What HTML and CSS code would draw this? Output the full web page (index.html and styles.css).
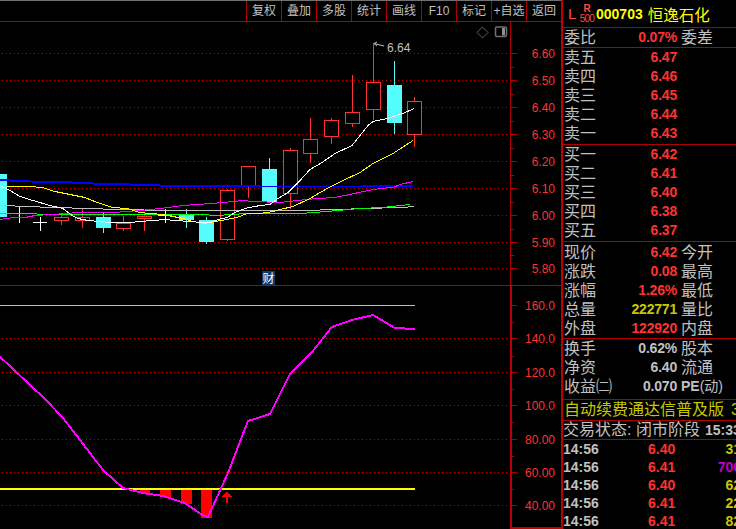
FILE: index.html
```html
<!DOCTYPE html>
<html lang="en">

<head>
    <meta http-equiv="Content-Type" content="text/html; charset=UTF-8">
    <title>000703 恒逸石化</title>
    <link rel="stylesheet" href="styles.css">
</head>

<body>
    <div class="app">
        <div class="main">
            <div class="toolbar">
                <div class="tool">复权</div>
                <div class="tool">叠加</div>
                <div class="tool">多股</div>
                <div class="tool">统计</div>
                <div class="tool">画线</div>
                <div class="tool">F10</div>
                <div class="tool">标记</div>
                <div class="tool">+自选</div>
                <div class="tool">返回</div>
            </div>
            <!-- viewBox starts at y=22 so chart numbers are page pixels -->
            <svg class="chart" width="561" height="507" viewBox="0 22 561 507">
                <g class="grid">
                    <line x1="2" y1="53.5" x2="509" y2="53.5" />
                    <line x1="2" y1="80.5" x2="509" y2="80.5" />
                    <line x1="2" y1="107.5" x2="509" y2="107.5" />
                    <line x1="2" y1="134.5" x2="509" y2="134.5" />
                    <line x1="2" y1="161.5" x2="509" y2="161.5" />
                    <line x1="2" y1="188.5" x2="509" y2="188.5" />
                    <line x1="2" y1="215.5" x2="509" y2="215.5" />
                    <line x1="2" y1="242.5" x2="509" y2="242.5" />
                    <line x1="2" y1="268.5" x2="509" y2="268.5" />
                    <line x1="2" y1="338.5" x2="509" y2="338.5" />
                    <line x1="2" y1="372.5" x2="509" y2="372.5" />
                    <line x1="2" y1="405.5" x2="509" y2="405.5" />
                    <line x1="2" y1="439.5" x2="509" y2="439.5" />
                    <line x1="2" y1="472.5" x2="509" y2="472.5" />
                    <line x1="2" y1="505.5" x2="509" y2="505.5" />
                </g>

                <!-- candles -->
                <g class="up">
                    <path d="M61.5 214V217M61.5 221V225M82.5 208V217M82.5 221V228M123.5 216V223M123.5 229V231M144.5 213V216M144.5 218V231M227.5 189V190M227.5 240V241M248.5 186V198M290.5 148V151M290.5 194V209M310.5 118V140M310.5 154V163M331.5 118V121M331.5 137V144M352.5 75V113M352.5 124V127M373.5 43V83M373.5 110V120M414.5 97V102M414.5 135V147" />
                    <rect x="54.5" y="217.5" width="14" height="3" />
                    <rect x="75.5" y="217.5" width="14" height="3" />
                    <rect x="116.5" y="223.5" width="14" height="5" />
                    <rect x="137.5" y="216.5" width="14" height="2" />
                    <rect x="220.5" y="190.5" width="14" height="49" />
                    <rect x="241.5" y="166.5" width="14" height="19" />
                    <rect x="283.5" y="150.5" width="14" height="43" />
                    <rect x="303.5" y="139.5" width="14" height="14" />
                    <rect x="324.5" y="120.5" width="14" height="16" />
                    <rect x="345.5" y="112.5" width="14" height="11" />
                    <rect x="366.5" y="82.5" width="14" height="27" />
                    <rect x="407.5" y="101.5" width="14" height="33" />
                </g>
                <g class="down">
                    <path d="M103.5 213V233M186.5 209V228M206.5 217V244M269.5 158V169M394.5 61V134" />
                    <rect x="-1" y="174" width="8" height="43" />
                    <rect x="96" y="217" width="15" height="11" />
                    <rect x="179" y="215" width="15" height="5" />
                    <rect x="199" y="220" width="15" height="22" />
                    <rect x="262" y="169" width="15" height="33" />
                    <rect x="387" y="85" width="15" height="38" />
                </g>
                <path class="doji" d="M19.5 206V223M40.5 217V231M33 222.5H47M165.5 209V223M158 215.5H172" />

                <!-- moving averages -->
                <g class="averages">
                    <polyline class="ma-blue" points="0,179 10,180 30,181 72,182 93,183 130,184 160,185 195,185 260,186 362,186 414,185" />
                    <polyline class="ma-gray" points="0,205 30,206 50,207 93,208 113,209 175,210 270,210 300,210 340,209 363,208 403,207 414,206" />
                    <polyline class="ma-green" points="0,213 73,214 113,214 200,214 217,215 247,213 270,213 300,213 327,211 360,208 383,207 410,204" />
                    <polyline class="ma-magenta" points="0,219 13,217 25,217 35,215 52,214 67,213 78,212 113,212 140,210 160,208 168,207 183,205 197,204 212,203 223,202 233,201 243,200 253,201 280,202 297,200 317,198 335,197 350,194 363,191 380,188 393,187 400,184 413,181" />
                    <polyline class="ma-yellow" points="0,187 15,186 30,186 42,187 55,191 70,194 85,197 97,202 113,207 127,208 140,212 150,213 163,214 173,216 183,218 193,221 205,223 215,221 227,219 237,217 247,213 260,213 273,211 280,209 293,206 310,198 327,188 343,180 360,172 373,163 393,153 413,140" />
                    <polyline class="ma-white" points="0,185 10,190 20,196 33,200 50,205 63,208 72,215 78,218 88,220 100,221 110,222 130,222 140,221 153,220 165,219 175,220 190,221 202,222 210,222 218,219 227,217 235,212 245,208 260,205 270,204 278,198 288,192 300,180 310,169 322,162 335,153 352,145 360,135 368,125 373,121 387,118 403,113 414,108" />
                </g>

                <!-- highest price mark -->
                <path class="mark" d="M384 46L374 43.5M374 43.5L377 42M374 43.5L377 46" />
                <text class="mark-text" x="387" y="52">6.64</text>

                <!-- corner icons -->
                <path class="icon-line" d="M482.5 27L488 32.5L482.5 38L477 32.5Z" />
                <rect class="icon-box" x="495.5" y="27" width="11" height="9.5" rx="1.5" />
                <rect class="icon-fill" x="502" y="28" width="3" height="7.5" />

                <!-- finance badge -->
                <rect class="badge" x="262" y="271" width="13" height="14" />
                <text class="badge-text" x="262.5" y="283">财</text>

                <!-- frame and axis -->
                <path class="frame" d="M0 285.5H561M510.5 22V285" />
                <path class="frame-thick" d="M511 285V528H561" />
                <path class="frame" d="M511 53.5H517M511 67.5H514M511 80.5H517M511 94.5H514M511 107.5H517M511 121.5H514M511 134.5H517M511 148.5H514M511 161.5H517M511 175.5H514M511 188.5H517M511 202.5H514M511 215.5H517M511 229.5H514M511 242.5H517M511 255.5H514M511 268.5H517" />
                <path class="frame" d="M511 305.5H517M511 322.5H514M511 338.5H517M511 356.5H514M511 372.5H517M511 389.5H514M511 405.5H517M511 422.5H514M511 439.5H517M511 456.5H514M511 472.5H517M511 489.5H514M511 505.5H517" />

                <g class="axis-text">
                    <text x="555" y="58">6.60</text>
                    <text x="555" y="85">6.50</text>
                    <text x="555" y="112">6.40</text>
                    <text x="555" y="139">6.30</text>
                    <text x="555" y="166">6.20</text>
                    <text x="555" y="193">6.10</text>
                    <text x="555" y="220">6.00</text>
                    <text x="555" y="247">5.90</text>
                    <text x="555" y="273">5.80</text>
                    <text x="555" y="310">160.0</text>
                    <text x="555" y="343">140.0</text>
                    <text x="555" y="377">120.0</text>
                    <text x="555" y="410">100.0</text>
                    <text x="555" y="444">80.00</text>
                    <text x="555" y="477">60.00</text>
                    <text x="555" y="510">40.00</text>
                </g>

                <!-- indicator pane -->
                <path class="bars" d="M140 489H150V493H140ZM160 489H171V497H160ZM181 489H192V504H181ZM201 489H212V518H201Z" />
                <line class="level-cyan" x1="0" y1="305.5" x2="415" y2="305.5" />
                <line class="level-yellow" x1="0" y1="489" x2="415" y2="489" />
                <polyline class="signal" points="0,357 10,366 30,385 45,399 63,418 80,440 103,470 123,488 143,493 163,496 185,503 202,515 208,517 228,473 248,421 270,414 290,374 312,352 332,327 352,320 373,315 395,328 415,329" />
                <path class="bars" d="M227 491L232 497H228V503H226V497H222Z" />
            </svg>
        </div>

        <div class="panel">
            <div class="head">
                <span class="head-l">L</span>
                <span class="head-r"><b>R</b><i>500</i></span>
                <span class="head-code">000703</span>
                <span class="head-name">恒逸石化</span>
            </div>
            <div class="block">
                <div class="row"><span>委比</span><b class="red">0.07%</b><span class="side">委差</span></div>
            </div>
            <div class="block pad-bottom">
                <div class="row"><span>卖五</span><b class="red">6.47</b></div>
                <div class="row"><span>卖四</span><b class="red">6.46</b></div>
                <div class="row"><span>卖三</span><b class="red">6.45</b></div>
                <div class="row"><span>卖二</span><b class="red">6.44</b></div>
                <div class="row"><span>卖一</span><b class="red">6.43</b></div>
            </div>
            <div class="block pad-bottom">
                <div class="row"><span>买一</span><b class="red">6.42</b></div>
                <div class="row"><span>买二</span><b class="red">6.41</b></div>
                <div class="row"><span>买三</span><b class="red">6.40</b></div>
                <div class="row"><span>买四</span><b class="red">6.38</b></div>
                <div class="row"><span>买五</span><b class="red">6.37</b></div>
            </div>
            <div class="block pad-top">
                <div class="row"><span>现价</span><b class="red">6.42</b><span class="side">今开</span></div>
                <div class="row"><span>涨跌</span><b class="red">0.08</b><span class="side">最高</span></div>
                <div class="row"><span>涨幅</span><b class="red">1.26%</b><span class="side">最低</span></div>
                <div class="row"><span>总量</span><b class="olive">222771</b><span class="side">量比</span></div>
                <div class="row"><span>外盘</span><b class="red">122920</b><span class="side">内盘</span></div>
            </div>
            <div class="block pad-bottom-3">
                <div class="row"><span>换手</span><b>0.62%</b><span class="side">股本</span></div>
                <div class="row"><span>净资</span><b>6.40</b><span class="side">流通</span></div>
                <div class="row"><span>收益㈡</span><b>0.070</b><span class="side pe-label"><b class="pe">PE</b>(动)</span></div>
            </div>
            <div class="block notice">自动续费通达信普及版<span class="notice-more">3</span></div>
            <div class="block status">交易状态: 闭市阶段<b class="status-time">15:33</b></div>
            <div class="tick"><b>14:56</b><b class="red">6.40</b><b class="olive">31</b></div>
            <div class="tick"><b>14:56</b><b class="red">6.41</b><b class="purple">700</b></div>
            <div class="tick"><b>14:56</b><b class="red">6.40</b><b class="olive">62</b></div>
            <div class="tick"><b>14:56</b><b class="red">6.41</b><b class="olive">22</b></div>
            <div class="tick"><b>14:56</b><b class="red">6.41</b><b class="olive">82</b></div>
        </div>
    </div>
</body>

</html>
```

FILE: styles.css
```css
html,
body {
    margin: 0;
    background-color: #000;
}

body {
    width: 736px;
    height: 529px;
    overflow: hidden;
    font-family: "Liberation Sans", "Noto Sans CJK SC", sans-serif;
    color: #c0c0c0;
}

.app {
    display: flex;
    height: 529px;
}

.main {
    width: 561px;
    flex: none;
}

/* toolbar */
.toolbar {
    display: flex;
    justify-content: flex-end;
    height: 20px;
    padding-top: 1px;
    border-bottom: 1px solid #b00000;
    box-shadow: inset 0 1px 0 #707070;
}

.tool {
    width: 34px;
    border-left: 1px solid #b00000;
    font-size: 12px;
    line-height: 20px;
    text-align: center;
    white-space: nowrap;
}

/* chart */
.chart {
    display: block;
}

.grid line {
    stroke: #c00000;
    stroke-dasharray: 1 3;
}

.up path,
.up rect {
    stroke: #ff3232;
    fill: #000;
    shape-rendering: crispEdges;
}

.down path {
    stroke: #54fcfc;
    shape-rendering: crispEdges;
}

.down rect {
    fill: #54fcfc;
    shape-rendering: crispEdges;
}

.doji {
    stroke: #fff;
    shape-rendering: crispEdges;
}

.averages polyline {
    fill: none;
    stroke-width: 1;
    shape-rendering: crispEdges;
    transform: translateY(0.5px);
}

.averages .ma-blue {
    stroke: #0000ff;
    stroke-width: 2;
}

.ma-gray {
    stroke: #c0c0c0;
}

.ma-green {
    stroke: #00ff00;
}

.ma-magenta {
    stroke: #ff00ff;
}

.ma-yellow {
    stroke: #ffff00;
}

.ma-white {
    stroke: #fff;
}

.mark {
    stroke: #c0c0c0;
    fill: none;
}

.mark-text {
    fill: #c0c0c0;
    font-size: 12px;
}

.icon-line {
    stroke: #606060;
    fill: none;
}

.icon-box {
    stroke: #707070;
    stroke-width: 1.5;
    fill: none;
}

.icon-fill {
    fill: #909090;
}

.badge {
    fill: #0f3a6a;
}

.badge-text {
    fill: #fff;
    font-size: 12px;
}

.frame {
    stroke: #b00000;
    fill: none;
    shape-rendering: crispEdges;
}

.frame-thick {
    stroke: #c00000;
    stroke-width: 2;
    fill: none;
    shape-rendering: crispEdges;
}

.axis-text text {
    fill: #ff3232;
    font-size: 12px;
    text-anchor: end;
}

.bars {
    fill: #ff0000;
    shape-rendering: crispEdges;
}

.level-cyan {
    stroke: #54e8e8;
    shape-rendering: crispEdges;
}

.level-yellow {
    stroke: #ffff00;
    stroke-width: 2;
    shape-rendering: crispEdges;
}

.signal {
    fill: none;
    stroke: #ff00ff;
    stroke-width: 2;
    shape-rendering: crispEdges;
}

/* quote panel */
.panel {
    flex: none;
    width: 173px;
    border-left: 2px solid #c00000;
    font-size: 16px;
}

.head {
    display: flex;
    align-items: center;
    height: 27px;
    border-bottom: 1px solid #b00000;
    white-space: nowrap;
}

.head-l {
    margin-left: 5px;
    width: 11.5px;
    color: #ff4a4a;
    font-size: 15px;
}

.head-r {
    display: flex;
    flex-direction: column;
    align-items: center;
    width: 15px;
    color: #ff4a4a;
}

.head-r b {
    font-size: 10px;
    line-height: 9px;
}

.head-r i {
    font-style: normal;
    font-size: 10px;
    line-height: 11px;
    letter-spacing: -0.8px;
}

.head-code {
    margin-left: 1.5px;
    color: #ffff00;
    font-size: 14px;
    font-weight: bold;
}

.head-name {
    margin-left: 5px;
    color: #ffff00;
    font-size: 15.5px;
}

.block {
    border-bottom: 1px solid #b00000;
}

.pad-bottom {
    padding-bottom: 1px;
}

.pad-top {
    padding-top: 1px;
}

.pad-bottom-3 {
    padding-bottom: 3px;
}

.row {
    display: grid;
    grid-template-columns: 52px 61px auto;
    height: 19px;
    padding-left: 1px;
    line-height: 19px;
    white-space: nowrap;
}

.row b {
    font-size: 14px;
    letter-spacing: -0.2px;
    text-align: right;
}

.side {
    padding-left: 4px;
}

.pe-label {
    font-size: 14px;
}

.row .pe {
    letter-spacing: 0;
}

.red {
    color: #ff3232;
}

.olive {
    color: #c8c800;
}

.purple {
    color: #c000c0;
}

.notice {
    height: 20px;
    padding-left: 1px;
    color: #c8c800;
    line-height: 20px;
    white-space: nowrap;
    overflow: hidden;
}

.notice-more {
    margin-left: 7px;
}

.status {
    height: 18px;
    line-height: 18px;
    white-space: nowrap;
    overflow: hidden;
}

.status-time {
    margin-left: 5px;
    font-size: 14px;
}

.tick {
    display: grid;
    grid-template-columns: 85px 27px 66px;
    width: 178px;
    height: 18px;
    font-size: 14px;
    line-height: 18px;
}

.tick b {
    white-space: nowrap;
}

.tick b:last-child {
    text-align: right;
}
```
